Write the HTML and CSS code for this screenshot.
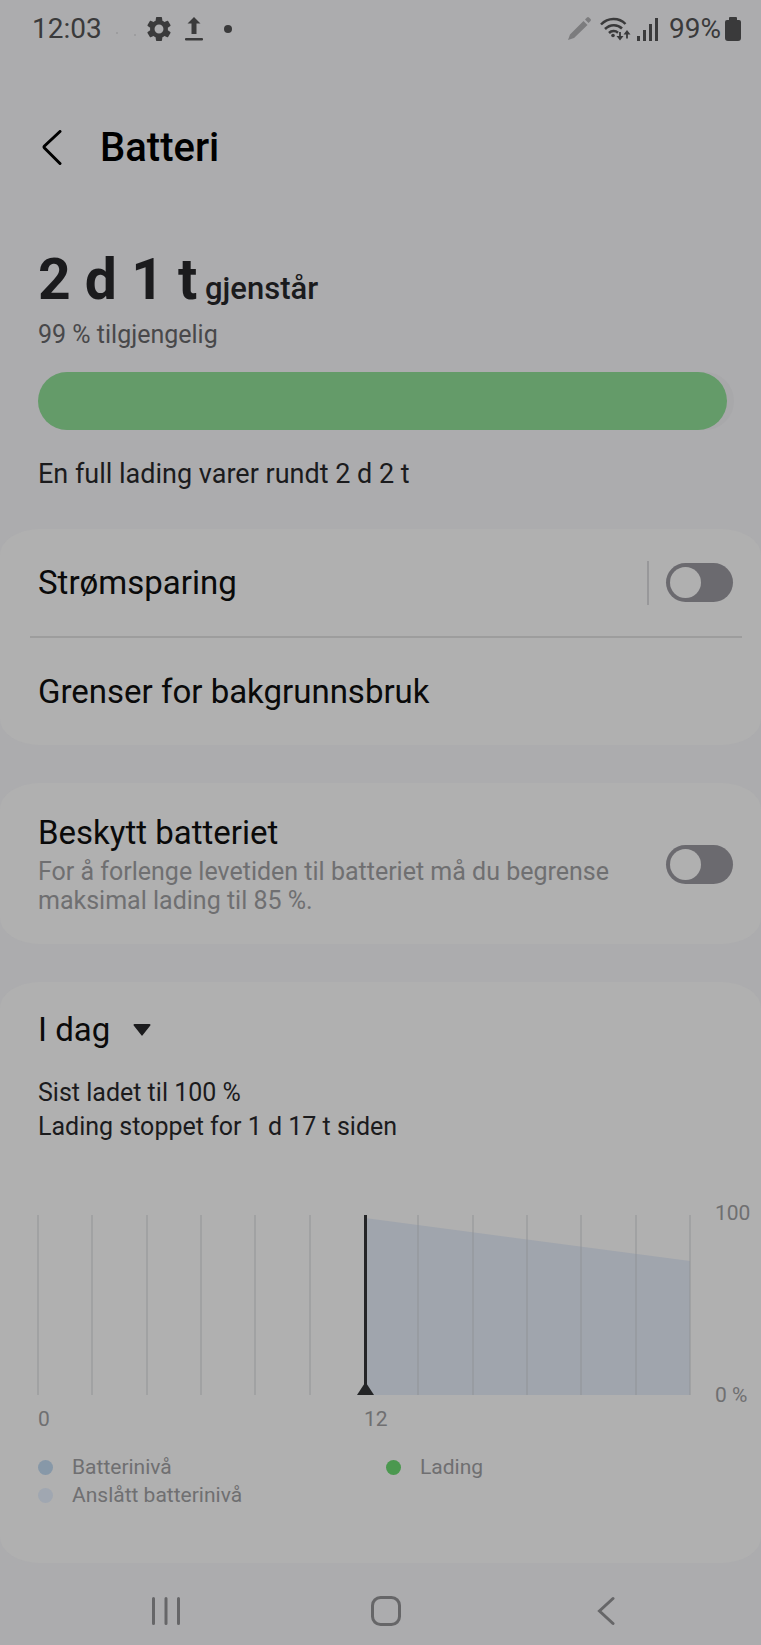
FILE: index.html
```
<!DOCTYPE html>
<html lang="no">
<head>
    <meta charset="UTF-8">
    <meta name="viewport" content="width=device-width, initial-scale=1.0">
    <title>Batteri</title>
    <link rel="stylesheet" href="styles.css">
</head>
<body>
    <div class="status-bar">
        <div class="status-left">
            <span class="clock">12:03</span>
            <svg class="faint-dots" width="20" height="28" viewBox="0 0 20 28">
                <circle cx="1" cy="18" r="1"/>
                <circle cx="19" cy="20" r="1"/>
            </svg>
            <svg class="gear-icon" width="26" height="26" viewBox="1.5 1.5 21 21">
                <path d="M19.14 12.94c.04-.3.06-.61.06-.94 0-.32-.02-.64-.07-.94l2.03-1.58a.49.49 0 0 0 .12-.61l-1.92-3.32a.488.488 0 0 0-.59-.22l-2.39.96c-.5-.38-1.03-.7-1.62-.94l-.36-2.54a.484.484 0 0 0-.48-.41h-3.84c-.24 0-.43.17-.47.41l-.36 2.54c-.59.24-1.13.57-1.62.94l-2.39-.96c-.22-.08-.47 0-.59.22L2.74 8.87c-.12.21-.08.47.12.61l2.03 1.58c-.05.3-.09.63-.09.94s.02.64.07.94l-2.03 1.58a.49.49 0 0 0-.12.61l1.92 3.32c.12.22.37.29.59.22l2.39-.96c.5.38 1.03.7 1.62.94l.36 2.54c.05.24.24.41.48.41h3.84c.24 0 .44-.17.47-.41l.36-2.54c.59-.24 1.13-.56 1.62-.94l2.39.96c.22.08.47 0 .59-.22l1.92-3.32c.12-.22.07-.47-.12-.61l-2.01-1.58zM12 15.6A3.6 3.6 0 1 1 12 8.4a3.6 3.6 0 0 1 0 7.2z"/>
            </svg>
            <svg class="upload-icon" width="18" height="24" viewBox="0 0 18 24">
                <path d="M9 0l6.5 6.5h-4V17h-5V6.500h-4zM1 21h16a1 1 0 0 1 0 2.500H1A1 1 0 0 1 1 21z"/>
            </svg>
            <svg class="dot-icon" width="8" height="8" viewBox="0 0 8 8"><circle cx="4" cy="4" r="4"/></svg>
        </div>
        <div class="status-right">
            <svg class="pencil-icon" width="23" height="24" viewBox="0 0 23 24">
                <path d="M0 23l2-5.500L15.500 4l4 4L6 21zM17 2.500L19 .5a1.500 1.500 0 0 1 2 0l1.500 1.500a1.500 1.500 0 0 1 0 2l-2 2z"/>
            </svg>
            <svg class="wifi-icon" width="31" height="24" viewBox="0 0 31 24">
                <g fill="none" stroke="currentColor" stroke-width="2.500">
                    <path d="M1 7.500C8 .2 19 .2 25.500 7"/>
                    <path d="M5 12c5-5 12.500-5 17-.5"/>
                    <path d="M9 16c2.500-2.500 6.500-2.500 9-.3"/>
                    <path d="M20 15v6M27 21.500v-6" stroke-width="1.800"/>
                </g>
                <circle cx="13" cy="18.500" r="1.800"/>
                <path d="M16.500 19h7L20 23.500zM23.500 17.500h7L27 13z"/>
            </svg>
            <svg class="signal-icon" width="21" height="23" viewBox="0 0 21 23">
                <path d="M0 18h3v5H0zM6 12h3v11H6zM12 6h3v17h-3zM18 0h3v23h-3z"/>
            </svg>
            <span class="percent">99%</span>
            <svg class="battery-icon" width="16" height="24" viewBox="0 0 16 24">
                <path d="M5 0h6a1 1 0 0 1 1 1v2h2a2 2 0 0 1 2 2v16a3 3 0 0 1-3 3H3a3 3 0 0 1-3-3V5a2 2 0 0 1 2-2h2V1a1 1 0 0 1 1-1z"/>
            </svg>
        </div>
    </div>

    <header class="header">
        <button class="back-btn" aria-label="Tilbake">
            <svg width="20" height="36" viewBox="0 0 20 36"><path d="M18 1.500L2.500 16a1.500 1.500 0 0 0 0 2L18 33.500"/></svg>
        </button>
        <h1 class="title">Batteri</h1>
    </header>

    <main>
        <section class="summary">
            <p class="remaining"><strong>2 d 1 t</strong> <span class="remaining-label">gjenstår</span></p>
            <p class="available">99 % tilgjengelig</p>
            <div class="level"><div class="level-fill" style="width: 99%"></div></div>
            <p class="full-charge">En full lading varer rundt 2 d 2 t</p>
        </section>

        <section class="card">
            <div class="row">
                <label class="row-title" for="saving">Strømsparing</label>
                <div class="split">
                    <input class="switch" type="checkbox" id="saving">
                </div>
            </div>
            <hr class="divider">
            <div class="row">
                <a class="row-title" href="#">Grenser for bakgrunnsbruk</a>
            </div>
        </section>

        <section class="card">
            <div class="row protect">
                <label class="row-text" for="protect">
                    <span class="row-title">Beskytt batteriet</span>
                    <span class="row-desc">For å forlenge levetiden til batteriet må du begrense maksimal lading til 85 %.</span>
                </label>
                <input class="switch" type="checkbox" id="protect">
            </div>
        </section>

        <section class="card usage">
            <div class="period">
                <select class="period-select" aria-label="Periode">
                    <option>I dag</option>
                </select>
                <svg class="caret" width="18" height="12" viewBox="0 0 18 12"><path d="M1.500 0h15a1 1 0 0 1 .8 1.600l-7.500 9.500a1 1 0 0 1-1.600 0L.7 1.600A1 1 0 0 1 1.500 0z"/></svg>
            </div>
            <p class="charge-info">Sist ladet til 100 %<br>Lading stoppet for 1 d 17 t siden</p>

            <div class="chart">
                <div class="plot">
                    <svg class="plot-svg" viewBox="0 0 652 180">
                        <path class="area" d="M327 3L652 46V180H327z"/>
                        <path class="grid" d="M0 0V180M54 0V180M109 0V180M163 0V180M217 0V180M272 0V180M380 0V180M435 0V180M489 0V180M543 0V180M598 0V180M652 0V180"/>
                        <path class="now-line" d="M327.500 0V172"/>
                        <path class="now-mark" d="M327.500 167L336 180H319z"/>
                    </svg>
                    <div class="x-axis"><span>0</span><span>12</span></div>
                </div>
                <div class="y-axis"><span>100</span><span>0 %</span></div>
            </div>

            <ul class="legend">
                <li><span class="swatch level-color"></span>Batterinivå</li>
                <li><span class="swatch charge-color"></span>Lading</li>
                <li><span class="swatch estimate-color"></span>Anslått batterinivå</li>
            </ul>
        </section>
    </main>

    <nav class="nav-bar">
        <button class="nav-btn" aria-label="Nylige apper">
            <svg width="30" height="32" viewBox="0 0 30 32"><path d="M2.500 3.500v25M15 3.500v25M27.500 3.500v25"/></svg>
        </button>
        <button class="nav-btn" aria-label="Hjem">
            <svg width="32" height="32" viewBox="0 0 32 32"><rect x="2.500" y="2.500" width="27" height="27" rx="8"/></svg>
        </button>
        <button class="nav-btn" aria-label="Tilbake">
            <svg width="18" height="32" viewBox="0 0 18 32"><path d="M16 3.500L2.500 16 16 28.500"/></svg>
        </button>
    </nav>
</body>
</html>
```

FILE: styles.css
```
:root {
    --bg: #acacae;
    --card: #b0b0b0;
    --text: #0a0a0a;
    --dark: #1b1b1d;
    --muted: #6f6f71;
    --status: #3a3a3b;
    --track: #6b6a6f;
    --green: #649b69;
}

* {
    margin: 0;
    padding: 0;
    box-sizing: border-box;
}

body {
    font-family: Roboto, sans-serif;
    min-height: 100vh;
    background-color: var(--bg);
    color: var(--dark);
    display: flex;
    flex-direction: column;
}

button {
    border: none;
    background: none;
    cursor: pointer;
    display: flex;
}

svg {
    display: block;
    fill: currentColor;
}

/* Status bar */
.status-bar {
    display: flex;
    justify-content: space-between;
    align-items: center;
    height: 58px;
    padding: 0 20px 0 32px;
    font-size: 28px;
    line-height: 32px;
    color: var(--status);
}

.status-left,
.status-right {
    display: flex;
    align-items: center;
}

.faint-dots {
    margin-left: 14px;
    color: #98989a;
}

.gear-icon {
    margin-left: 10px;
}

.upload-icon {
    margin-left: 13px;
}

.dot-icon {
    margin-left: 21px;
}

.pencil-icon {
    color: #7c7c7e;
}

.wifi-icon {
    margin-left: 9px;
}

.signal-icon {
    margin: 0 11px 0 6px;
}

.battery-icon {
    margin-left: 4px;
}

/* Header */
.header {
    display: flex;
    align-items: center;
    gap: 38px;
    padding: 64px 42px 0;
    color: #000;
}

.back-btn svg {
    fill: none;
    stroke: #000;
    stroke-width: 3;
    stroke-linecap: round;
}

.title {
    font-size: 40px;
    line-height: 52px;
    font-weight: 500;
}

/* Summary */
.summary {
    padding: 71px 27px 39px 38px;
}

.remaining {
    font-size: 31px;
    line-height: 70px;
    font-weight: 500;
}

.remaining strong {
    font-size: 57px;
    font-weight: 700;
}

.available {
    font-size: 25px;
    line-height: 22px;
    color: #48484a;
}

.level {
    height: 58px;
    margin: 26px 0 28px;
    border-radius: 29px;
    background-color: #a8a8aa;
}

.level-fill {
    height: 100%;
    border-radius: 29px;
    background-color: var(--green);
}

.full-charge {
    font-size: 27px;
    line-height: 32px;
}

/* Cards */
.card {
    background-color: var(--card);
    border-radius: 40px / 26px;
    margin-bottom: 38px;
}

.row {
    display: flex;
    align-items: center;
    justify-content: space-between;
    min-height: 107px;
    padding: 0 28px 0 38px;
}

.row-title {
    font-size: 33px;
    line-height: 40px;
    color: var(--text);
    text-decoration: none;
}

.divider {
    border: none;
    height: 2px;
    margin: 0 19px 0 30px;
    background-color: #9d9d9d;
}

.split {
    display: flex;
    align-items: center;
    height: 44px;
    padding-left: 17px;
    border-left: 2px solid #98989a;
}

.switch {
    appearance: none;
    flex: none;
    width: 67px;
    height: 39px;
    padding: 4px;
    border-radius: 20px;
    background-color: var(--track);
    cursor: pointer;
}

.switch::before {
    content: "";
    display: block;
    width: 31px;
    height: 31px;
    border-radius: 50%;
    background-color: var(--card);
}

.switch:checked {
    background-color: var(--green);
}

.switch:checked::before {
    margin-left: auto;
}

.protect {
    padding-top: 30px;
    padding-bottom: 29px;
}

.row-text {
    display: flex;
    flex-direction: column;
    gap: 4px;
    max-width: 580px;
}

.row-desc {
    font-size: 25px;
    line-height: 29px;
    color: var(--muted);
}

/* Usage */
.usage {
    margin-bottom: 0;
    padding: 28px 11px 54px 38px;
}

.period {
    display: flex;
    align-items: center;
    gap: 22px;
}

.period-select {
    appearance: none;
    border: none;
    background: none;
    font-family: inherit;
    font-size: 33px;
    line-height: 40px;
    color: var(--text);
}

.charge-info {
    margin: 26px 0 71px;
    font-size: 25px;
    line-height: 34px;
}

.chart {
    display: flex;
    gap: 25px;
    font-size: 21px;
    line-height: 28px;
    color: var(--muted);
}

.plot {
    flex: 1;
    display: flex;
    flex-direction: column;
    gap: 10px;
}

.plot-svg {
    width: 100%;
    overflow: visible;
}

.area {
    fill: #a0a5ad;
}

.grid {
    stroke: #8c8e91;
    stroke-opacity: 0.4;
    stroke-width: 2;
}

.now-line {
    stroke: #242527;
    stroke-width: 3;
}

.now-mark {
    fill: #242527;
}

.x-axis {
    display: grid;
    grid-template-columns: 1fr 1fr;
}

.y-axis {
    display: flex;
    flex-direction: column;
    justify-content: space-between;
    width: 35px;
    margin: -16px 0 24px;
    white-space: nowrap;
}

.legend {
    display: grid;
    grid-template-columns: 348px 1fr;
    margin-top: 20px;
    list-style: none;
    font-size: 21px;
    line-height: 28px;
    color: var(--muted);
}

.legend li {
    display: flex;
    align-items: center;
    gap: 19px;
}

.swatch {
    width: 15px;
    height: 15px;
    border-radius: 50%;
}

.level-color {
    background-color: #8798a8;
}

.charge-color {
    background-color: #4b984f;
}

.estimate-color {
    background-color: #a0a7b1;
}

/* Navigation bar */
.nav-bar {
    display: flex;
    flex: 1;
    align-items: center;
    min-height: 80px;
    padding: 14px 45px 0 56px;
}

.nav-btn {
    flex: 1;
    justify-content: center;
}

.nav-btn svg {
    fill: none;
    stroke: #666668;
    stroke-width: 3;
    stroke-linecap: round;
}
```
